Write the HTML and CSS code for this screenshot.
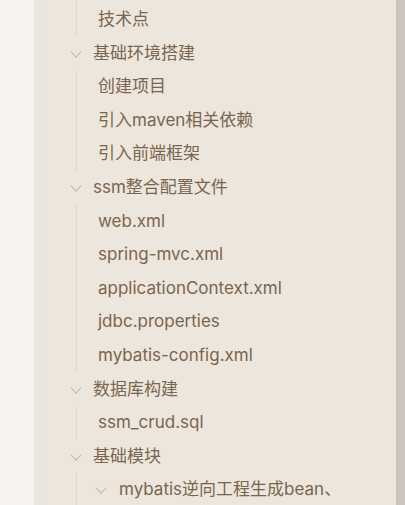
FILE: index.html
```html
<!DOCTYPE html>
<html lang="zh">
<head>
<meta charset="utf-8">
<link rel="stylesheet" href="styles.css">
</head>
<body>
<div class="app">
  <div class="gutter"></div>
  <div class="divider"></div>
  <div class="outline">
    <ul class="children top">
      <li class="leaf">技术点</li>
    </ul>
    <div class="parent"><span class="chev"></span><span class="label">基础环境搭建</span></div>
    <ul class="children">
      <li class="leaf">创建项目</li>
      <li class="leaf">引入maven相关依赖</li>
      <li class="leaf">引入前端框架</li>
    </ul>
    <div class="parent"><span class="chev"></span><span class="label">ssm整合配置文件</span></div>
    <ul class="children">
      <li class="leaf">web.xml</li>
      <li class="leaf">spring-mvc.xml</li>
      <li class="leaf">applicationContext.xml</li>
      <li class="leaf">jdbc.properties</li>
      <li class="leaf">mybatis-config.xml</li>
    </ul>
    <div class="parent"><span class="chev"></span><span class="label">数据库构建</span></div>
    <ul class="children">
      <li class="leaf">ssm_crud.sql</li>
    </ul>
    <div class="parent"><span class="chev"></span><span class="label">基础模块</span></div>
    <ul class="children">
      <li class="parent nested"><span class="chev"></span><span class="label">mybatis逆向工程生成bean、</span></li>
    </ul>
  </div>
  <div class="scrollbar"></div>
</div>
</body>
</html>
```
FILE: styles.css
```css
html, body {
  margin: 0;
  padding: 0;
  height: 100%;
  overflow: hidden;
}
body {
  font-family: Inter, "Noto Sans CJK SC", sans-serif;
  font-size: 17px;
  color: #7a654d;
}
.app {
  display: flex;
  height: 505px;
}
.gutter {
  width: 34px;
  background: #f6f3ee;
}
.divider {
  width: 12px;
  background: #e9e5df;
}
.outline {
  flex: 1;
  background: #ede6dd;
  overflow: hidden;
}
.scrollbar {
  width: 9px;
  background: #cbc3bc;
}
ul {
  list-style: none;
  margin: 0;
  padding: 0;
}
.children {
  margin-left: 30px;
  border-left: 1px solid #e0d6ca;
}
.children.top {
  padding-top: 3px;
}
.leaf, .parent {
  height: 33.6px;
  line-height: 33.6px;
  white-space: nowrap;
}
.leaf {
  padding-left: 21px;
}
.parent {
  display: flex;
  align-items: center;
  padding-left: 19px;
}
.parent.nested {
  padding-left: 13px;
}
.chev {
  position: relative;
  width: 22px;
  height: 33.6px;
  flex: none;
}
.chev::before {
  content: "";
  position: absolute;
  left: 7px;
  top: 11px;
  width: 7px;
  height: 7px;
  border-right: 1.3px solid #cbb79d;
  border-bottom: 1.3px solid #cbb79d;
  transform: rotate(45deg);
}
.label {
  margin-left: 6px;
}
.nested .label {
  margin-left: 7px;
}
```
